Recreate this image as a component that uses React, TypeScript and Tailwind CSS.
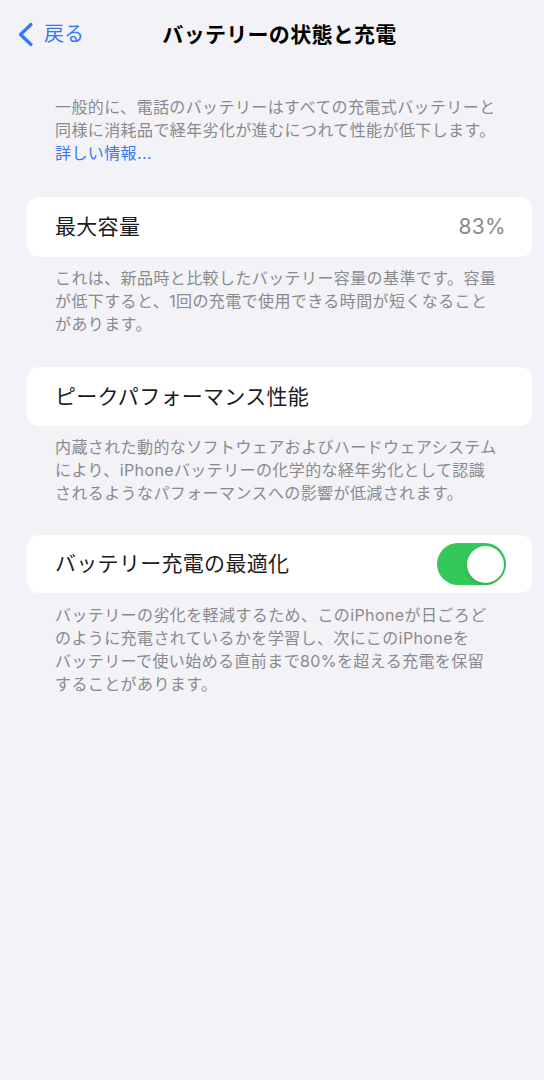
import React from 'react';

const BLUE = 'text-[#3478f6]';

function Footer({ lines, className = '' }: { lines: string[]; className?: string }) {
  return (
    <div className={`px-[55px] text-[16px] leading-[23px] tracking-[0.4px] text-[#8a8a8e] whitespace-nowrap ${className}`}>
      {lines.map((l, i) => (
        <div key={i}>{l}</div>
      ))}
    </div>
  );
}

function Card({ children, className = '' }: { children: React.ReactNode; className?: string }) {
  return (
    <div className={`mx-[27px] flex items-center justify-between rounded-[12px] bg-white pl-[28px] pr-[26px] ${className}`}>
      {children}
    </div>
  );
}

export default function App() {
  return (
    <div className="min-h-[1080px] w-full overflow-hidden bg-[#f2f2f7] font-['Inter','Noto_Sans_CJK_JP',sans-serif] text-black">
      <div className="w-[559px]">
        {/* nav bar */}
        <div className="mt-[12px] grid h-[44px] grid-cols-[1fr_auto_1fr] items-center">
          <div className={`flex items-center gap-[10px] pl-[17px] ${BLUE}`}>
            <svg width="17" height="25" viewBox="0 0 17 25" fill="none">
              <path d="M14 2.5L3.5 12.5L14 22.5" stroke="currentColor" strokeWidth="3.2" strokeLinecap="round" strokeLinejoin="round" />
            </svg>
            <span className="text-[20px] leading-none">戻る</span>
          </div>
          <h1 className="text-[21px] font-bold leading-none tracking-[0.3px]">バッテリーの状態と充電</h1>
          <div />
        </div>

        {/* intro */}
        <div className="mt-[40px] px-[55px] text-[16px] leading-[23px] tracking-[0.4px] text-[#8a8a8e] whitespace-nowrap">
          <div>一般的に、電話のバッテリーはすべての充電式バッテリーと</div>
          <div>同様に消耗品で経年劣化が進むにつれて性能が低下します。</div>
          <div className={BLUE}>詳しい情報...</div>
        </div>

        {/* max capacity */}
        <Card className="mt-[32px] h-[60px]">
          <span className="text-[21px] tracking-[0.3px] text-[#1c1c1e]">最大容量</span>
          <span className="text-[21px] tracking-[0.3px] text-[#8a8a8e]">83%</span>
        </Card>
        <Footer
          className="mt-[10px]"
          lines={[
            'これは、新品時と比較したバッテリー容量の基準です。容量',
            'が低下すると、1回の充電で使用できる時間が短くなること',
            'があります。',
          ]}
        />

        {/* peak performance */}
        <Card className="mt-[31px] h-[59px]">
          <span className="text-[21px] tracking-[0.3px] text-[#1c1c1e]">ピークパフォーマンス性能</span>
        </Card>
        <Footer
          className="mt-[10px]"
          lines={[
            '内蔵された動的なソフトウェアおよびハードウェアシステム',
            'により、iPhoneバッテリーの化学的な経年劣化として認識',
            'されるようなパフォーマンスへの影響が低減されます。',
          ]}
        />

        {/* optimized charging */}
        <Card className="mt-[30px] h-[58px]">
          <span className="text-[21px] tracking-[0.3px] text-[#1c1c1e]">バッテリー充電の最適化</span>
          <div className="flex h-[42px] w-[69px] items-center justify-end rounded-full bg-[#34c759] p-[2.5px]">
            <div className="h-[37px] w-[37px] rounded-full bg-white shadow-[0_2px_4px_rgba(0,0,0,0.15)]" />
          </div>
        </Card>
        <Footer
          className="mt-[11px]"
          lines={[
            'バッテリーの劣化を軽減するため、このiPhoneが日ごろど',
            'のように充電されているかを学習し、次にこのiPhoneを',
            'バッテリーで使い始める直前まで80%を超える充電を保留',
            'することがあります。',
          ]}
        />
      </div>
    </div>
  );
}
